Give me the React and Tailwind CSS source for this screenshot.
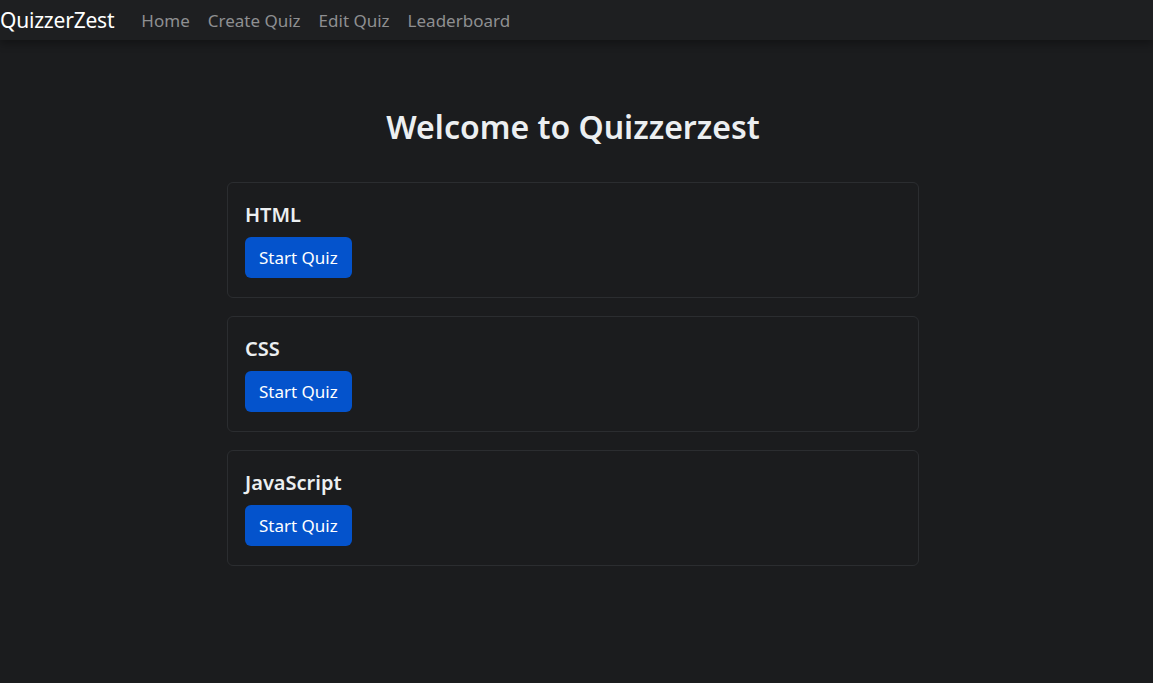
export default function App() {
  const quizzes = ["HTML", "CSS", "JavaScript"];
  return (
    <div className="min-h-[683px] bg-[#1b1c1e] text-[#dee2e6]" style={{ fontFamily: '"Noto Sans", "Open Sans", sans-serif' }}>
      <nav className="h-[40px] bg-[#1e1f21] flex items-center shadow-[0_4px_8px_rgba(0,0,0,0.3)]">
        <span className="text-[21px] text-white leading-none tracking-[-0.2px]">QuizzerZest</span>
        <div className="flex ml-[27px] gap-[18px] text-[17px] text-[#8e8f91] leading-none">
          <span>Home</span>
          <span>Create Quiz</span>
          <span>Edit Quiz</span>
          <span>Leaderboard</span>
        </div>
      </nav>
      <main className="w-[692px] ml-[227px] pt-[67px]">
        <h2 className="text-center text-[32px] font-semibold text-[#eceff1] leading-[40px] mb-[35px]">Welcome to Quizzerzest</h2>
        <div className="flex flex-col gap-[18px]">
          {quizzes.map((q) => (
            <div key={q} className="border border-[#2b2d30] rounded-[6px] h-[116px] px-[17px] pt-[19px]">
              <h5 className="text-[20px] font-semibold text-[#eceff1] leading-[26px] mb-[9px]">{q}</h5>
              <button className="h-[41px] px-[14px] rounded-[6px] bg-[#0453cc] text-white text-[17px]">Start Quiz</button>
            </div>
          ))}
        </div>
      </main>
    </div>
  );
}
